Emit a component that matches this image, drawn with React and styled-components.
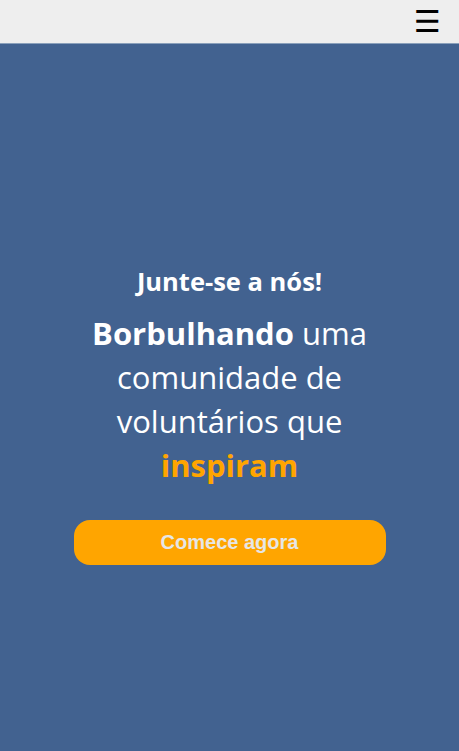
import React from 'react';
import styled, { createGlobalStyle } from 'styled-components';

const GlobalStyle = createGlobalStyle`
  * { box-sizing: border-box; }
  body {
    margin: 0;
    font-family: 'Open Sans', 'Noto Sans', sans-serif;
    background: #426290;
  }
`;

const Header = styled.header`
  height: 44px;
  background: #eeeeee;
  border-bottom: 1px solid #8aa0bb;
  display: flex;
  align-items: center;
  justify-content: flex-end;
  padding: 0 18px;
`;

const MenuButton = styled.button`
  background: none;
  border: none;
  padding: 0;
  font-family: 'DejaVu Sans', sans-serif;
  font-size: 30px;
  line-height: 1;
  color: #000;
  cursor: pointer;
`;

const Hero = styled.main`
  height: 100vh;
  padding-bottom: 9px;
  background: #426290;
  display: flex;
  align-items: center;
  justify-content: center;
`;

const Content = styled.div`
  width: 312px;
  display: flex;
  flex-direction: column;
  align-items: center;
  text-align: center;
  color: #fff;
`;

const Kicker = styled.h2`
  margin: 0 0 12px;
  font-size: 25.5px;
  font-weight: 700;
  line-height: 1.3;
`;

const Title = styled.h1`
  margin: 0;
  font-size: 31px;
  font-weight: 400;
  line-height: 44px;
`;

const Strong = styled.strong`
  font-weight: 700;
  color: ${({ $accent }) => ($accent ? '#ffa500' : '#fff')};
`;

const Button = styled.button`
  margin-top: 33px;
  width: 100%;
  height: 45px;
  border: none;
  border-radius: 16px;
  background: #ffa500;
  color: #e6e6e6;
  font-family: 'Liberation Sans', Arial, sans-serif;
  font-size: 20px;
  font-weight: 700;
  cursor: pointer;
`;

const App = () => {
  return (
    <>
      <GlobalStyle />
      <Header>
        <MenuButton>☰</MenuButton>
      </Header>
      <Hero>
        <Content>
          <Kicker>Junte-se a nós!</Kicker>
          <Title>
            <Strong>Borbulhando</Strong> uma comunidade de voluntários que{' '}
            <Strong $accent>inspiram</Strong>
          </Title>
          <Button>Comece agora</Button>
        </Content>
      </Hero>
    </>
  );
};

export default App;
